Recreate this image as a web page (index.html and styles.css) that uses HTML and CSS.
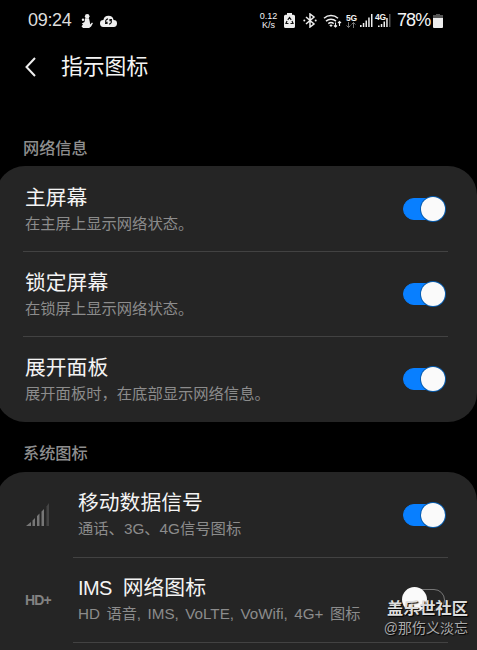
FILE: index.html
```html
<!DOCTYPE html>
<html lang="zh-CN">
<head>
    <meta charset="UTF-8">
    <meta name="viewport" content="width=device-width, initial-scale=1.0">
    <title>指示图标</title>
    <link rel="stylesheet" href="styles.css">
</head>
<body>
    <div class="status">
        <span class="time">09:24</span>
        <svg class="person" width="12" height="14" viewBox="0 0 12 14">
            <circle cx="6.2" cy="2.3" r="2.3"/>
            <path d="M4 4.3h4l.8 3.7.4 2.5L11 8.500l.9.7-1.800 3.300-2 1.500H2L.5 12.300 2 10.500.8 9.600l2.700-1.500z"/>
            <circle cx="2" cy="5.8" r="1.2"/>
        </svg>
        <svg class="cloud" width="17" height="12" viewBox="0 0 17 12">
            <path d="M3.6 12a3.5 3.5 0 0 1-.2-7A5.2 5.2 0 0 1 13.6 5a3.5 3.5 0 0 1-.2 7z"/>
            <path class="cut" d="M6.5 8.5A2.7 2.7 0 0 1 8 3.8M10.5 4.5A2.7 2.7 0 0 1 9 9.2M5 8.5h2V6.8M12 4.5h-2v1.7"/>
        </svg>
        <div class="speed"><span>0.12</span><span>K/s</span></div>
        <svg class="saver" width="11" height="15" viewBox="0 0 11 15">
            <path d="M3 0h5v1.8h1.5A1.5 1.5 0 0 1 11 3.3v10.2A1.5 1.5 0 0 1 9.5 15h-8A1.5 1.5 0 0 1 0 13.5V3.3A1.5 1.5 0 0 1 1.5 1.8H3z"/>
            <path class="cut" d="M3.8 6.8 5.5 4.5l1.7 2.3M8 8l1 2.5H6.5M4.5 10.5H2L3 8"/>
        </svg>
        <svg class="bt" width="14" height="15" viewBox="0 0 14 15">
            <path class="line" d="m3 4 8 7-4 3V1l4 3-8 7"/>
            <circle cx="1.3" cy="7.5" r="1"/><circle cx="12.7" cy="7.5" r="1"/>
        </svg>
        <svg class="wifi" width="19" height="14" viewBox="0 0 19 14">
            <path class="line" d="M1 4.2a10.5 10.5 0 0 1 14 0M3 7.1a7.5 7.5 0 0 1 10 0M5.3 9.6a4.2 4.2 0 0 1 5.4 0"/>
            <path d="M6.3 11.2a2.5 2.5 0 0 1 3.4 0L8 13z"/>
            <path class="thin" d="M12.5 8.5v4.5m-1.500-1.500 1.500 1.500 1.500-1.500M16.5 12V7.5M15 9l1.500-1.500L18 9"/>
        </svg>
        <div class="net"><span>5G</span>
            <svg width="10" height="6" viewBox="0 0 10 6"><path class="arrows" d="M2.5 0v5.5M.5 3.5l2 2 2-2M7.5 6V.5m-2 2 2-2 2 2"/></svg>
        </div>
        <svg class="bars" width="13" height="13" viewBox="0 0 13 13">
            <path d="M0 11h1.6v2H0zM2.8 9h1.5v4H2.8zM5.5 6.5H7V13H5.5zM8.2 3.5h1.5V13H8.2zM11 0h1.5v13H11z"/>
        </svg>
        <div class="sim2"><span>4G</span>
            <svg width="13" height="13" viewBox="0 0 13 13">
                <path d="M0 11.5h1.6V13H0zM2.8 10h1.5v3H2.8zM5.5 7.5H7V13H5.5zM8.2 4h1.5v9H8.2z"/>
                <path class="dim" d="M11 0h1.5v13H11z"/>
            </svg>
        </div>
        <span class="percent">78%</span>
        <svg class="battery" width="10" height="14" viewBox="0 0 10 14">
            <path class="dim" d="M3 0h4v1h3v4H0V1h3z"/>
            <path d="M0 4h10v9a1 1 0 0 1-1 1H1a1 1 0 0 1-1-1z"/>
        </svg>
    </div>

    <div class="header">
        <svg width="11" height="20" viewBox="0 0 11 20"><path d="M10 1 1.5 10 10 19"/></svg>
        <h1>指示图标</h1>
    </div>

    <h2 class="label">网络信息</h2>
    <div class="card">
        <div class="row">
            <div class="text"><div class="title">主屏幕</div><div class="desc">在主屏上显示网络状态。</div></div>
            <div class="switch on"></div>
        </div>
        <div class="row">
            <div class="text"><div class="title">锁定屏幕</div><div class="desc">在锁屏上显示网络状态。</div></div>
            <div class="switch on"></div>
        </div>
        <div class="row">
            <div class="text"><div class="title">展开面板</div><div class="desc">展开面板时，在底部显示网络信息。</div></div>
            <div class="switch on"></div>
        </div>
    </div>

    <h2 class="label second">系统图标</h2>
    <div class="card open">
        <div class="row with-icon">
            <div class="icon">
                <svg width="24" height="23" viewBox="0 0 24 23">
                    <path d="M0 23l5-4v4zM6.5 17.5 9 15v8H6.5zM11 13l2.5-2.5V23H11zM15.5 8.5 18 6v17h-2.5z"/>
                    <path class="faint" d="M20.5 3.5 23 0v23h-2.5z"/>
                </svg>
            </div>
            <div class="text"><div class="title">移动数据信号</div><div class="desc">通话、3G、4G信号图标</div></div>
            <div class="switch on"></div>
        </div>
        <div class="row with-icon">
            <div class="icon hd">HD+</div>
            <div class="text"><div class="title"><span class="latin">IMS</span>网络图标</div><div class="desc ims">HD 语音, IMS, VoLTE, VoWifi, 4G+ 图标</div></div>
            <div class="switch"></div>
        </div>
        <div class="end"></div>
    </div>

    <div class="watermark">
        <div class="site">盖乐世社区</div>
        <div class="user">@那伤义淡忘</div>
    </div>
</body>
</html>
```
FILE: styles.css
```css
*{
    box-sizing: border-box;
}
body {
    margin: 0;
    height: 650px;
    overflow: hidden;
    background-color: #000;
    color: #f4f4f4;
    font-family: "Liberation Sans", "Noto Sans CJK SC", sans-serif;
    white-space: nowrap;
}
svg{
    display: block;
    flex: none;
    fill: #eee;
}
.status{
    display: flex;
    align-items: center;
    height: 41px;
    padding-left: 28px;
}
.status > *{
    flex: none;
}
.time{
    width: 53px;
    font-size: 18px;
    letter-spacing: -0.3px;
    color: #ddd;
}
.cloud{
    margin-left: 7px;
}
.cut{
    fill: none;
    stroke: #111;
    stroke-width: 1.2;
}
.speed{
    display: flex;
    flex-direction: column;
    align-items: center;
    width: 19px;
    margin-left: 142px;
    font-size: 9px;
    line-height: 9px;
}
.saver{
    margin-left: 6px;
}
.bt{
    margin-left: 8px;
}
.line{
    fill: none;
    stroke: #eee;
    stroke-width: 1.5;
}
.thin{
    fill: none;
    stroke: #eee;
    stroke-width: 1.1;
}
.wifi{
    margin-left: 6px;
}
.net{
    width: 12px;
    margin-left: 4px;
    font-size: 8.5px;
    font-weight: bold;
    line-height: 8px;
    letter-spacing: -0.3px;
}
.net span{
    display: block;
}
.arrows{
    fill: none;
    stroke: #777;
}
.bars{
    margin-left: 2px;
}
.sim2{
    display: flex;
    align-items: flex-end;
    height: 13px;
    margin-left: 2px;
}
.sim2 span{
    align-self: flex-start;
    width: 11px;
    margin-right: -8px;
    font-size: 8.5px;
    font-weight: bold;
    line-height: 7px;
    letter-spacing: -0.3px;
}
.dim{
    fill: #555;
}
.percent{
    width: 36px;
    margin-left: 6px;
    font-size: 18px;
    letter-spacing: -0.9px;
}
.header{
    display: flex;
    align-items: center;
    height: 51px;
    padding-left: 25px;
}
.header svg{
    fill: none;
    stroke: #eee;
    stroke-width: 2;
}
.header h1{
    margin: 0 0 0 25px;
    font-size: 21.8px;
    font-weight: 400;
    line-height: 30px;
}
.label{
    height: 24px;
    margin: 44px 0 0 23px;
    font-size: 16.2px;
    font-weight: 500;
    line-height: 24px;
    color: #8e8e8e;
}
.label.second{
    margin-top: 19px;
}
.card{
    margin: 6px 0 0 -4px;
    height: 256px;
    padding: 0 29px 0 27px;
    border-radius: 29px;
    background-color: #252525;
}
.card.open{
    height: 178px;
    margin-top: 7px;
    border-radius: 29px 29px 0 0;
}
.row{
    display: flex;
    align-items: center;
    justify-content: space-between;
    height: 85px;
    padding: 0 3px 0 2px;
}
.text{
    padding-top: 2px;
}
.row + .row{
    border-top: 1px solid #424242;
}
.with-icon + .with-icon{
    border-top: none;
    background: linear-gradient(#424242, #424242) 50px 0 / 100% 1px no-repeat;
}
.end{
    height: 1px;
    margin-left: 50px;
    background-color: #424242;
}
.title{
    font-size: 20.8px;
    line-height: 28px;
}
.desc{
    font-size: 15.3px;
    line-height: 24px;
    color: #8c8c8c;
}
.with-icon .text{
    flex: 1;
    padding-top: 1px;
}
.latin{
    margin-right: 11px;
    font-size: 20px;
    letter-spacing: -0.6px;
}
.ims{
    font-size: 15.2px;
    word-spacing: 2.3px;
}
.icon{
    width: 53px;
    flex: none;
}
.icon svg{
    margin-left: 1px;
    fill: #777;
}
.icon .faint{
    fill: #444;
}
.hd{
    font-size: 14px;
    font-weight: bold;
    letter-spacing: -0.8px;
    color: #828282;
}
.switch{
    display: flex;
    align-items: center;
    width: 42px;
    height: 22px;
    border: 1px solid #777;
    border-radius: 11px;
}
.switch::before{
    content: "";
    width: 25px;
    height: 25px;
    flex: none;
    margin-left: -2px;
    border-radius: 50%;
    background-color: #fafafa;
}
.switch.on{
    justify-content: flex-end;
    border-color: #087fff;
    background-color: #087fff;
}
.switch.on::before{
    width: 24px;
    height: 24px;
    margin: 0 -1px 0 0;
    box-shadow: 0 0 0 1px #075cae;
}
/* watermark sits over the last rows */
.watermark{
    position: absolute;
    right: 9px;
    bottom: 11px;
    text-align: right;
    text-shadow: 1px 1px 1px #000;
}
.site{
    font-size: 16.2px;
    font-weight: bold;
    line-height: 20px;
    color: #ddd;
}
.user{
    font-size: 14px;
    line-height: 21px;
    color: #aaa;
}
```
